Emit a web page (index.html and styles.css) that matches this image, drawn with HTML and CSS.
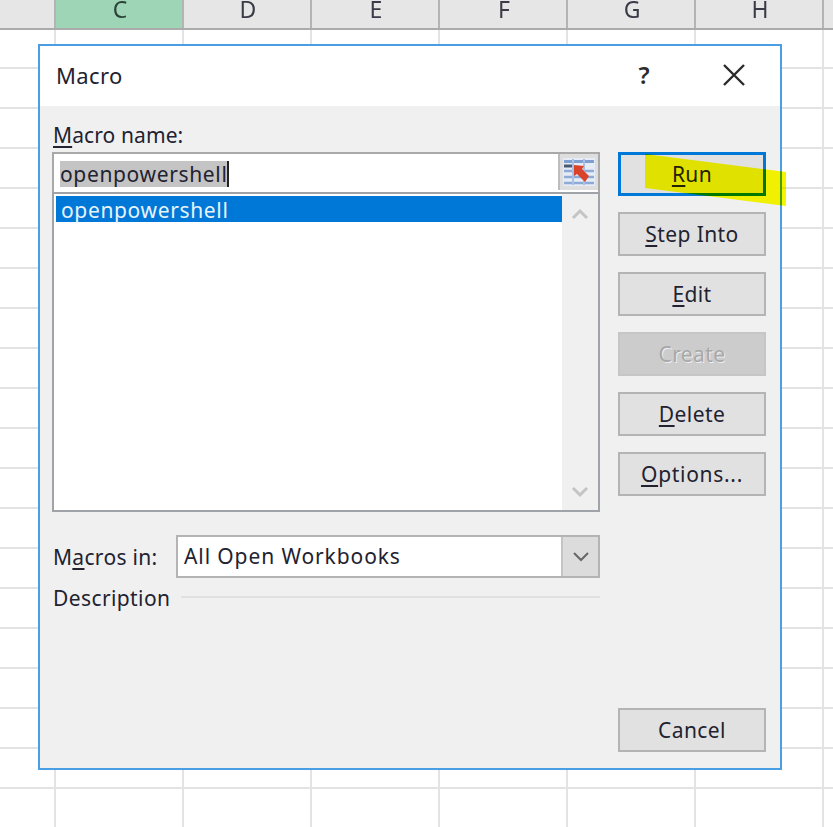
FILE: index.html
```html
<!DOCTYPE html>
<html lang="en">
<head>
    <meta charset="UTF-8">
    <meta name="viewport" content="width=device-width, initial-scale=1.0">
    <title>Macro</title>
    <link rel="stylesheet" href="styles.css">
</head>
<body>

<div class="sheet">
    <div class="col-headers">
        <div class="col-head col-corner"></div>
        <div class="col-head col-active">C</div>
        <div class="col-head">D</div>
        <div class="col-head">E</div>
        <div class="col-head">F</div>
        <div class="col-head">G</div>
        <div class="col-head">H</div>
        <div class="col-head col-rest"></div>
    </div>
    <div class="cells"></div>

    <div class="dialog">
        <div class="title-bar">
            <span class="title">Macro</span>
            <span class="help">?</span>
            <svg class="close" width="24" height="24" viewBox="0 0 24 24">
                <path d="M2 2 L22 22 M22 2 L2 22" stroke="#2b2b2b" stroke-width="2.4" fill="none"/>
            </svg>
        </div>
        <div class="dialog-body">
            <div class="main-col">
                <div class="label name-label"><u>M</u>acro name:</div>
                <div class="name-box">
                    <div class="name-value"><span class="selected-text">openpowershell</span><span class="caret"></span></div>
                    <div class="ref-btn">
                        <svg width="32" height="28" viewBox="0 0 32 28">
                            <rect x="0" y="0" width="32" height="28" fill="#e6ecf6"/>
                            <rect x="1" y="2" width="30" height="3" fill="#7f9fd0"/>
                            <path d="M1 13 H31 M1 19 H31 M1 25 H31" stroke="#8eabd8" stroke-width="2.5" fill="none"/>
                            <path d="M10 1 V27 M21 1 V27" stroke="#a9c0e2" stroke-width="2" fill="none"/>
                            <path d="M1 8 H9" stroke="#4a5a72" stroke-width="3" fill="none"/>
                            <path d="M11 7 L21 8 L19 11 L26 18 L22 24 L14 16 L11 18 Z" fill="#d9432a"/>
                        </svg>
                    </div>
                </div>
                <div class="macro-list">
                    <div class="list-rows">
                        <div class="list-row">openpowershell</div>
                    </div>
                    <div class="scrollbar">
                        <svg width="18" height="12" viewBox="0 0 18 12"><path d="M2 10 L9 3 L16 10" stroke="#c4c4c4" stroke-width="3" fill="none"/></svg>
                        <svg width="18" height="12" viewBox="0 0 18 12"><path d="M2 2 L9 9 L16 2" stroke="#c4c4c4" stroke-width="3" fill="none"/></svg>
                    </div>
                </div>
                <div class="macros-in">
                    <div class="label macros-label">M<u>a</u>cros in:</div>
                    <div class="combo">
                        <div class="combo-value">All Open Workbooks</div>
                        <div class="combo-arrow">
                            <svg width="18" height="11" viewBox="0 0 18 11"><path d="M2 2 L9 9 L16 2" stroke="#666" stroke-width="2" fill="none"/></svg>
                        </div>
                    </div>
                </div>
                <div class="description">
                    <div class="label desc-label">Description</div>
                    <div class="desc-line"></div>
                </div>
            </div>
            <div class="button-col">
                <button class="btn btn-default"><u>R</u>un</button>
                <button class="btn"><u>S</u>tep Into</button>
                <button class="btn"><u>E</u>dit</button>
                <button class="btn btn-disabled">Create</button>
                <button class="btn"><u>D</u>elete</button>
                <button class="btn btn-options"><u>O</u>ptions...</button>
                <button class="btn btn-cancel">Cancel</button>
            </div>
        </div>
    </div>

    <div class="highlighter"></div>
</div>

</body>
</html>
```

FILE: styles.css
```css
html, body {
    margin: 0;
    height: 100%;
    background: white;
}
body {
    font-family: "Noto Sans", "Open Sans", sans-serif;
    color: #222230;
    overflow: hidden;
}
.sheet {
    position: relative;
    width: 833px;
    height: 827px;
    overflow: hidden;
    display: flex;
    flex-direction: column;
    filter: blur(0.6px);
}

/* column headers */
.col-headers {
    display: flex;
    height: 28px;
    flex: none;
    background: #e6e6e6;
    border-bottom: 2px solid #ababab;
}
.col-head {
    width: 128px;
    flex: none;
    box-sizing: border-box;
    border-right: 2px solid #b4b4b4;
    padding-left: 2px;
    font-size: 23px;
    line-height: 18px;
    text-align: center;
    color: #3a3a48;
}
.col-corner {
    width: 56px;
}
.col-active {
    background: #9fd5b7;
    color: #2a4038;
}
.col-rest {
    border-right: none;
}
.cells {
    flex: 1;
    background-image:
        linear-gradient(to right, #e3e3e3 2px, transparent 2px),
        linear-gradient(to bottom, #e3e3e3 2px, transparent 2px);
    background-size: 128px 40px;
    background-position: 54px 37px;
}

/* dialog */
.dialog {
    position: absolute;
    left: 38px;
    top: 44px;
    width: 744px;
    height: 726px;
    box-sizing: border-box;
    border: 2px solid #4a9fe4;
    background: #f0f0f0;
    display: flex;
    flex-direction: column;
}
.title-bar {
    height: 60px;
    flex: none;
    background: white;
    display: flex;
    align-items: center;
    padding-left: 16px;
    padding-bottom: 3px;
    box-sizing: border-box;
}
.title {
    font-size: 22px;
    letter-spacing: 0.4px;
    flex: 1;
}
.help {
    font-size: 24px;
    font-weight: 600;
    width: 24px;
    text-align: center;
    color: #2b2b2b;
    margin-right: 66px;
}
.close {
    margin-right: 34px;
}
.dialog-body {
    flex: 1;
    display: flex;
    gap: 18px;
    padding: 15px 14px 16px 12px;
    min-height: 0;
}
.main-col {
    width: 548px;
    flex: none;
    display: flex;
    flex-direction: column;
}
.label {
    font-size: 21px;
    line-height: 28px;
    white-space: nowrap;
}
.label u, .btn u {
    text-decoration-thickness: 2px;
    text-underline-offset: 3px;
}
.name-label {
    height: 31px;
    padding-left: 1px;
    letter-spacing: 0.1px;
}

/* macro name box */
.name-box {
    height: 40px;
    box-sizing: border-box;
    border: 2px solid #a9a9a9;
    border-bottom: none;
    background: white;
    display: flex;
}
.name-value {
    flex: 1;
    display: flex;
    align-items: center;
    padding-left: 6px;
    padding-top: 2px;
    font-size: 21px;
    letter-spacing: 0.65px;
}
.selected-text {
    background: #c4c4c4;
    line-height: 26px;
}
.caret {
    width: 2px;
    height: 26px;
    background: #222;
}
.ref-btn {
    width: 40px;
    height: 36px;
    box-sizing: border-box;
    background: #dedede;
    border-left: 2px solid #bdbdbd;
    display: flex;
    align-items: center;
    justify-content: center;
}

/* macro list */
.macro-list {
    height: 320px;
    box-sizing: border-box;
    border: 2px solid #a0a4a8;
    background: white;
    display: flex;
}
.list-rows {
    flex: 1;
    padding: 2px 0 0 2px;
}
.list-row {
    height: 26px;
    background: #0078d7;
    color: #e8f3fc;
    font-size: 21px;
    letter-spacing: 0.65px;
    line-height: 28px;
    padding-left: 5px;
}
.scrollbar {
    width: 36px;
    flex: none;
    background: #f0f0f0;
    display: flex;
    flex-direction: column;
    justify-content: space-between;
    align-items: center;
    padding: 14px 0 12px;
    box-sizing: border-box;
}

/* macros in */
.macros-in {
    display: flex;
    align-items: center;
    margin-top: 23px;
    height: 43px;
}
.macros-label {
    width: 124px;
    flex: none;
    padding-left: 1px;
    box-sizing: border-box;
    letter-spacing: 0.3px;
}
.combo {
    flex: 1;
    height: 43px;
    box-sizing: border-box;
    border: 2px solid #b4b4b4;
    background: white;
    display: flex;
}
.combo-value {
    flex: 1;
    font-size: 21px;
    letter-spacing: 0.9px;
    line-height: 39px;
    padding-left: 6px;
}
.combo-arrow {
    width: 35px;
    flex: none;
    background: #dcdcdc;
    border-left: 2px solid #c4c4c4;
    display: flex;
    align-items: center;
    justify-content: center;
}
.description {
    display: flex;
    align-items: center;
    height: 40px;
    padding-left: 1px;
}
.desc-label {
    letter-spacing: 0.4px;
}
.desc-line {
    flex: 1;
    height: 2px;
    background: #e0e0e0;
    margin-left: 11px;
    margin-top: -2px;
}

/* buttons */
.button-col {
    width: 148px;
    flex: none;
    display: flex;
    flex-direction: column;
    gap: 16px;
    padding-top: 31px;
}
.btn {
    height: 44px;
    flex: none;
    padding: 0;
    border: 2px solid #b4b4b4;
    background: #e1e1e1;
    font-family: inherit;
    font-size: 21px;
    letter-spacing: 0.4px;
    color: #222230;
}
.btn-default {
    border: 3px solid #0078d7;
}
.btn-disabled {
    background: #cccccc;
    border-color: #c6c6c6;
    color: #a8a8a8;
    text-shadow: 1px 1px 0 #eeeeee;
}
.btn-options {
    letter-spacing: 0.7px;
}
.btn-cancel {
    margin-top: auto;
}

/* yellow marker stroke over the Run button */
.highlighter {
    position: absolute;
    left: 645px;
    top: 154px;
    width: 141px;
    height: 52px;
    background: #f5f500;
    mix-blend-mode: darken;
    clip-path: polygon(0 0, 100% 18px, 100% 100%, 0 34px);
}
```
